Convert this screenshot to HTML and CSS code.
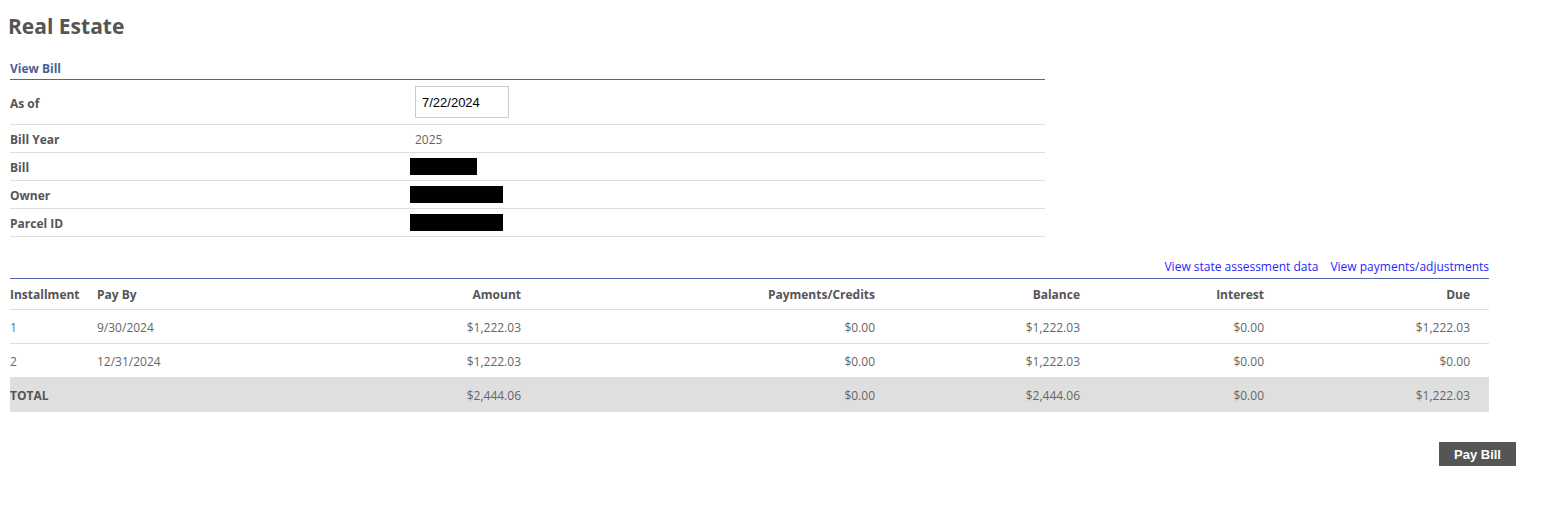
FILE: index.html
```html
<!DOCTYPE html>
<html>
<head>
<meta charset="utf-8">
<link rel="stylesheet" href="styles.css">
</head>
<body>
<h1 class="page-title">Real Estate</h1>
<div class="content">
  <section class="bill-info">
    <div class="section-title">View Bill</div>
    <div class="info-row info-row-tall">
      <div class="info-label">As of</div>
      <div class="info-value"><input class="date-input" type="text" value="7/22/2024"></div>
    </div>
    <div class="info-row">
      <div class="info-label">Bill Year</div>
      <div class="info-value info-text">2025</div>
    </div>
    <div class="info-row">
      <div class="info-label">Bill</div>
      <div class="info-value"><span class="redact redact-short"></span></div>
    </div>
    <div class="info-row">
      <div class="info-label">Owner</div>
      <div class="info-value"><span class="redact redact-long"></span></div>
    </div>
    <div class="info-row">
      <div class="info-label">Parcel ID</div>
      <div class="info-value"><span class="redact redact-long"></span></div>
    </div>
  </section>

  <section class="installments">
    <div class="links">
      <a href="#" class="link">View state assessment data</a>
      <a href="#" class="link">View payments/adjustments</a>
    </div>
    <table class="inst-table">
      <colgroup>
        <col class="c1"><col class="c2"><col class="c3"><col class="c4"><col class="c5"><col class="c6"><col class="c7">
      </colgroup>
      <thead>
        <tr>
          <th class="left">Installment</th>
          <th class="left">Pay By</th>
          <th class="right">Amount</th>
          <th class="right">Payments/Credits</th>
          <th class="right">Balance</th>
          <th class="right">Interest</th>
          <th class="right last">Due</th>
        </tr>
      </thead>
      <tbody>
        <tr>
          <td class="left"><a href="#" class="num-link">1</a></td>
          <td class="left">9/30/2024</td>
          <td class="right">$1,222.03</td>
          <td class="right">$0.00</td>
          <td class="right">$1,222.03</td>
          <td class="right">$0.00</td>
          <td class="right last">$1,222.03</td>
        </tr>
        <tr>
          <td class="left">2</td>
          <td class="left">12/31/2024</td>
          <td class="right">$1,222.03</td>
          <td class="right">$0.00</td>
          <td class="right">$1,222.03</td>
          <td class="right">$0.00</td>
          <td class="right last">$0.00</td>
        </tr>
        <tr class="total-row">
          <td class="left total-label">TOTAL</td>
          <td class="left"></td>
          <td class="right">$2,444.06</td>
          <td class="right">$0.00</td>
          <td class="right">$2,444.06</td>
          <td class="right">$0.00</td>
          <td class="right last">$1,222.03</td>
        </tr>
      </tbody>
    </table>
    <div class="actions">
      <button class="pay-btn" type="button">Pay Bill</button>
    </div>
  </section>
</div>
</body>
</html>
```

FILE: styles.css
```css
html, body {
  margin: 0;
  padding: 0;
  background: #fff;
}
body {
  padding: 8px;
  font-family: "Open Sans", "Noto Sans", sans-serif;
  font-size: 12px;
  color: #555;
}
.page-title {
  margin: 0;
  padding-top: 3px;
  font-size: 21px;
  line-height: 30px;
  font-weight: 700;
  color: #555;
}
.content {
  padding: 0 2px;
}
.bill-info {
  width: 1035px;
  margin-top: 20px;
}
.section-title {
  font-size: 12px;
  font-weight: 700;
  color: #4a5f95;
  line-height: 16px;
  padding-bottom: 2px;
  border-bottom: 1px solid #5a6584;
}
.info-row {
  display: flex;
  align-items: center;
  height: 27px;
  border-bottom: 1px solid #ddd;
}
.info-row-tall {
  height: 44px;
}
.info-label {
  width: 400px;
  padding-top: 2px;
  font-weight: 700;
  color: #555;
}
.info-value {
  display: flex;
  align-items: center;
}
.info-text {
  padding-left: 5px;
  padding-top: 2px;
  color: #666;
}
.date-input {
  margin-left: 5px;
  width: 94px;
  height: 32px;
  box-sizing: border-box;
  border: 1px solid #ccc;
  padding: 0 6px;
  font-family: "Liberation Sans", Arial, sans-serif;
  font-size: 13px;
  color: #000;
  outline: none;
}
.redact {
  display: block;
  height: 17px;
  background: #000;
}
.redact-short { width: 67px; }
.redact-long { width: 93px; }

.installments {
  width: 1479px;
  margin-top: 21px;
}
.links {
  display: flex;
  justify-content: flex-end;
  gap: 12px;
  line-height: 18px;
  padding-bottom: 2px;
  border-bottom: 1px solid #4a6aa8;
}
.link {
  color: #2a1fff;
  text-decoration: none;
  font-size: 12px;
}
.inst-table {
  width: 100%;
  table-layout: fixed;
  border-collapse: collapse;
}
.c1 { width: 87px; }
.c2 { width: 200px; }
.c3 { width: 224px; }
.c4 { width: 354px; }
.c5 { width: 205px; }
.c6 { width: 184px; }
.c7 { width: 225px; }
.inst-table th,
.inst-table td {
  padding: 0;
  height: 33px;
  border-bottom: 1px solid #ddd;
  white-space: nowrap;
}
.inst-table th {
  height: 30px;
  font-weight: 700;
  color: #555;
}
.inst-table td {
  color: #666;
  padding-top: 2px;
  height: 31px;
}
.left { text-align: left; }
.right { text-align: right; }
.last { padding-right: 19px !important; }
.num-link {
  color: #3a7bc0;
  text-decoration: none;
}
.inst-table .total-row td {
  background: #dfdfdf;
  border-bottom: none;
  padding-top: 0;
  height: 34px;
}
.total-row .total-label {
  font-weight: 700;
  color: #555;
}
.actions {
  display: flex;
  justify-content: flex-end;
  padding-top: 30px;
  margin-right: -27px;
}
.pay-btn {
  width: 77px;
  height: 24px;
  border: none;
  background: #555;
  color: #fff;
  font-family: "Liberation Sans", Arial, sans-serif;
  font-weight: 700;
  font-size: 13px;
  padding: 0;
  cursor: pointer;
}
```
